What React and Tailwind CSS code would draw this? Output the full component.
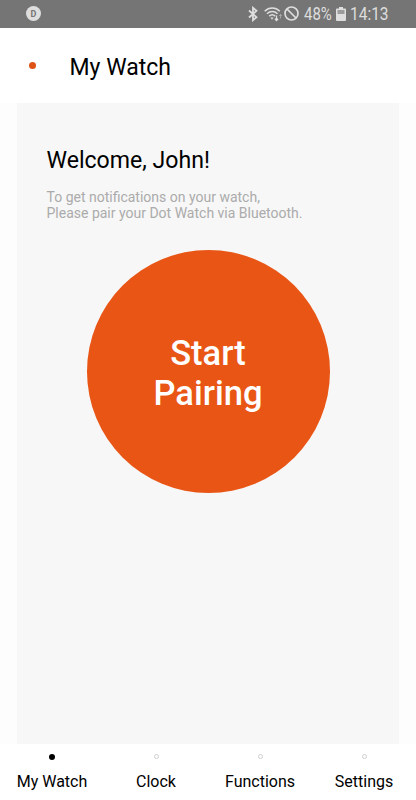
const tabs = [
  { label: 'My Watch', active: true },
  { label: 'Clock' },
  { label: 'Functions' },
  { label: 'Settings' },
]

function BluetoothIcon() {
  return (
    <svg width="10" height="16" viewBox="0 0 10 16" fill="none" stroke="currentColor" strokeWidth="1.8">
      <path d="M1 4.5 8.5 11.2 5 14.2V1.8L8.5 4.8 1 11.5" />
    </svg>
  )
}

function WifiIcon() {
  return (
    <svg width="19" height="16" viewBox="0 0 19 16" fill="none" stroke="currentColor" strokeWidth="1.5">
      <path d="M.7 5.2C5 .9 11.5.9 15.8 5.2M3 7.7c3-2.9 7.5-2.9 10.5 0M5.3 10.1c1.7-1.6 4.2-1.6 5.9 0" />
      <path d="M6.4 11.6h3.2L8 13.7z" fill="currentColor" stroke="none" />
      <path d="M12.5 9.5v4.8M10.9 12.7l1.6 1.8 1.6-1.8" strokeWidth="1.3" />
      <path d="M16.5 12.5v-4M15.2 10l1.3-1.5 1.3 1.5" strokeWidth="1" opacity=".45" />
    </svg>
  )
}

function BlockedIcon() {
  return (
    <svg width="15" height="15" viewBox="0 0 15 15" fill="none" stroke="currentColor" strokeWidth="1.7">
      <circle cx="7.5" cy="7.5" r="6.5" />
      <path d="m3 3 9 9" />
    </svg>
  )
}

function BatteryIcon() {
  return (
    <svg width="10" height="14" viewBox="0 0 10 14" fill="currentColor">
      <path d="M3 0h4v1.5h2a1 1 0 0 1 1 1V13a1 1 0 0 1-1 1H1a1 1 0 0 1-1-1V2.5a1 1 0 0 1 1-1h2z" />
      <path d="M1.5 3h7v4h-7z" fill="#9b9b9b" />
    </svg>
  )
}

function StatusBar() {
  return (
    <div className="flex h-[27.5px] shrink-0 items-center bg-[#757575] pr-7 pl-[26px] text-[#dedede]">
      <div className="flex size-[15px] items-center justify-center rounded-full bg-[#dedede] pt-px text-[9px] font-bold text-[#757575]">
        D
      </div>
      <div className="ml-auto flex items-center">
        <BluetoothIcon />
        <div className="ml-1.5"><WifiIcon /></div>
        <div className="ml-px"><BlockedIcon /></div>
        <div className="ml-[5px] w-[29px] text-[18px] leading-[22px]">
          <span className="inline-block origin-left scale-x-[.83]">48%</span>
        </div>
        <div className="ml-[3px]"><BatteryIcon /></div>
        <div className="ml-1 w-[38px] text-[18px] leading-[22px]">
          <span className="inline-block origin-left scale-x-[.86]">14:13</span>
        </div>
      </div>
    </div>
  )
}

export default function App() {
  return (
    <div className="flex h-[800px] w-[416px] flex-col overflow-hidden bg-[#fdfdfd] font-['Roboto',sans-serif] text-black">
      <StatusBar />
      <header className="flex h-[75.5px] shrink-0 items-center bg-white pl-[29px]">
        <span className="mr-[33.5px] size-[7px] rounded-full bg-[#df5216]" />
        <h1 className="pt-1.5 text-[23px] leading-7">My Watch</h1>
      </header>

      <main className="mr-[17px] ml-[17px] flex-1 bg-[#f7f7f7] px-[29px] pt-11">
        <h2 className="pl-[0.5px] text-[23.1px] leading-7">Welcome, John!</h2>
        <p className="mt-3.5 pl-[0.5px] text-[14px] leading-4 whitespace-nowrap text-[#ababab]">
          To get notifications on your watch,
          <br />
          Please pair your Dot Watch via Bluetooth.
        </p>
        <button className="mx-auto mt-[28.5px] flex size-[243px] items-center justify-center rounded-full bg-[#e95515] pt-[3px] text-[34.5px] leading-10 font-medium text-white">
          <span>
            Start
            <br />
            Pairing
          </span>
        </button>
      </main>

      <nav className="grid h-14 shrink-0 grid-cols-4 bg-white">
        {tabs.map((tab) => (
          <button key={tab.label} className="flex flex-col items-center pt-2.5">
            <span className="flex h-1.5 items-start">
              <span
                className={
                  tab.active
                    ? 'size-1.5 rounded-full bg-black'
                    : 'size-[5px] rounded-full border border-[#cfcfcf]'
                }
              />
            </span>
            <span className="mt-2.5 text-base leading-6 whitespace-nowrap">{tab.label}</span>
          </button>
        ))}
      </nav>
    </div>
  )
}
